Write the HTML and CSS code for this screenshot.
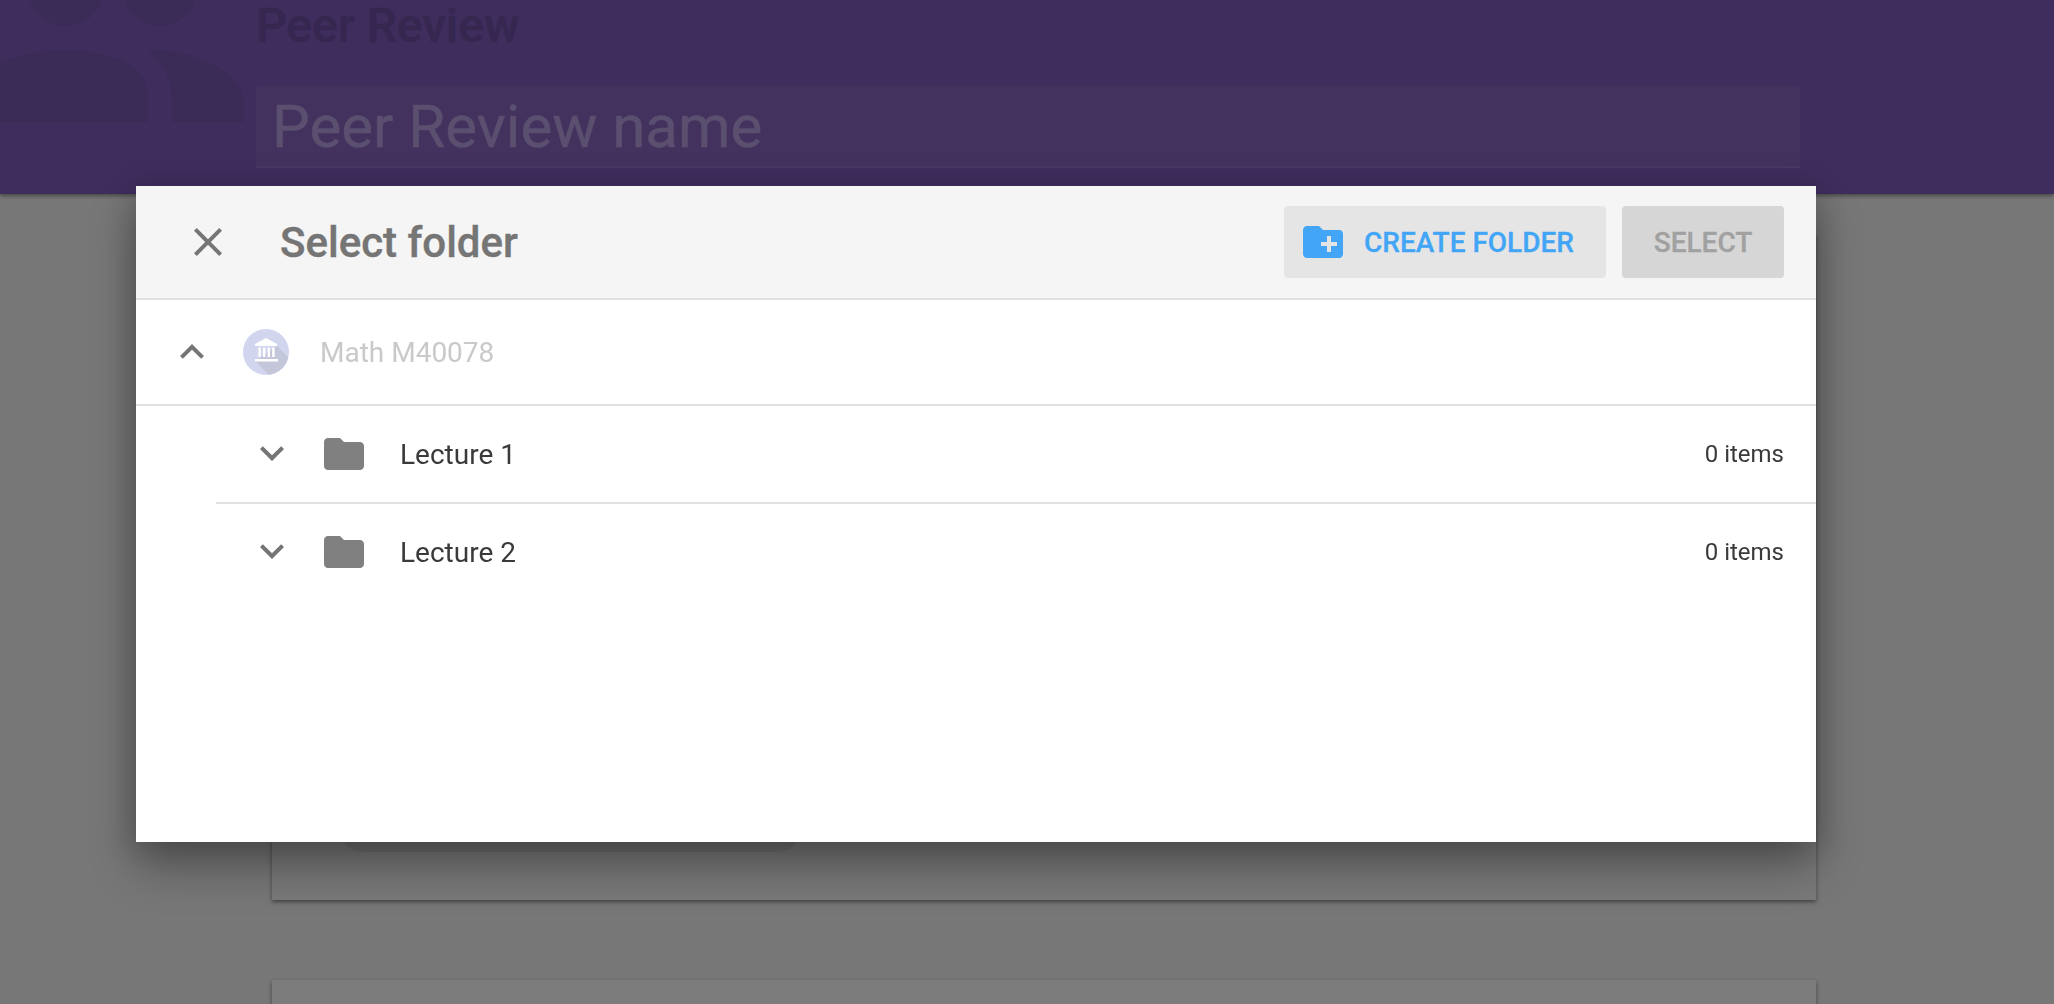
FILE: index.html
```html
<!DOCTYPE html>
<html lang="en">
<head>
<meta charset="utf-8">
<title>Select folder</title>
<link rel="stylesheet" href="styles.css">
</head>
<body>
<div class="page">
  <header class="hero">
    <svg class="hero-icon" width="256" height="194" viewBox="0 0 256 194">
      <circle cx="66" cy="-12" r="38"/>
      <circle cx="160" cy="-12" r="38"/>
      <path d="M-16 122V72C5 58 35 50 66 50C112 50 148 66 148 96V122Z"/>
      <path d="M148 50C200 50 244 74 244 104V122H172V98C172 80 163 63 148 50Z"/>
    </svg>
    <div class="hero-body">
      <h1 class="hero-title">Peer Review</h1>
      <div class="hero-input">Peer Review name</div>
    </div>
  </header>
  <main class="content">
    <section class="card card-first"><div class="pill"></div></section>
    <section class="card card-second"></section>
  </main>
</div>

<div class="dialog">
  <div class="dialog-head">
    <svg class="icon close" viewBox="0 0 24 24"><path d="M19 6.41L17.59 5 12 10.59 6.41 5 5 6.41 10.59 12 5 17.59 6.41 19 12 13.41 17.59 19 19 17.59 13.41 12z"/></svg>
    <h2 class="dialog-title">Select folder</h2>
    <button class="btn btn-create">
      <svg class="icon" viewBox="0 0 24 24"><path d="M20 6h-8l-2-2H4c-1.11 0-1.99.89-1.99 2L2 18c0 1.11.89 2 2 2h16c1.11 0 2-.89 2-2V8c0-1.11-.89-2-2-2zm-1 8h-3v3h-2v-3h-3v-2h3V9h2v3h3v2z"/></svg>
      <span>CREATE FOLDER</span>
    </button>
    <button class="btn btn-select">SELECT</button>
  </div>
  <div class="row row-root">
    <svg class="icon chev" viewBox="0 0 24 24"><path d="M12 8l-6 6 1.41 1.41L12 10.83l4.59 4.58L18 14z"/></svg>
    <svg class="badge" viewBox="0 0 46 46">
      <defs><clipPath id="disc"><circle cx="23" cy="23" r="23"/></clipPath></defs>
      <circle class="badge-bg" cx="23" cy="23" r="23"/>
      <path class="badge-shade" clip-path="url(#disc)" d="M34 17L64 47V64H44L12 32Z"/>
      <path class="badge-mark" d="M23 9L12 15V17H34V15ZM15.4 18.6H17.8V28H15.4ZM20 18.6H22.4V28H20ZM24.6 18.6H27V28H24.6ZM29.2 18.6H31.6V28H29.2ZM12 30H35V32.4H12Z"/>
    </svg>
    <span class="root-name">Math M40078</span>
  </div>
  <div class="tree">
    <div class="row row-folder">
      <svg class="icon chev chev-down" viewBox="0 0 24 24"><path d="M16.59 8.59L12 13.17 7.41 8.59 6 10l6 6 6-6z"/></svg>
      <svg class="icon folder" viewBox="0 0 24 24"><path d="M10 4H4c-1.1 0-1.99.9-1.99 2L2 18c0 1.1.9 2 2 2h16c1.1 0 2-.9 2-2V8c0-1.1-.9-2-2-2h-8l-2-2z"/></svg>
      <span class="folder-name">Lecture 1</span>
      <span class="folder-count">0 items</span>
    </div>
    <div class="row row-folder">
      <svg class="icon chev chev-down" viewBox="0 0 24 24"><path d="M16.59 8.59L12 13.17 7.41 8.59 6 10l6 6 6-6z"/></svg>
      <svg class="icon folder" viewBox="0 0 24 24"><path d="M10 4H4c-1.1 0-1.99.9-1.99 2L2 18c0 1.1.9 2 2 2h16c1.1 0 2-.9 2-2V8c0-1.1-.9-2-2-2h-8l-2-2z"/></svg>
      <span class="folder-name">Lecture 2</span>
      <span class="folder-count">0 items</span>
    </div>
  </div>
</div>
</body>
</html>
```
FILE: styles.css
```css
* { box-sizing: border-box; }
html, body { margin: 0; height: 100%; overflow: hidden; }
body { background: #777; font-family: Roboto, "Liberation Sans", sans-serif; }

.page { height: 1004px; overflow: hidden; }

.hero {
  height: 194px;
  display: flex;
  background: #3f2d5e;
  box-shadow: 0 2px 4px rgba(0, 0, 0, .4);
  position: relative;
}
.hero-icon { flex: none; fill: #3a2b57; }
.hero-body { width: 1544px; }
.hero-title {
  margin: 0;
  height: 86px;
  font-size: 48px;
  line-height: 52px;
  font-weight: 500;
  -webkit-text-stroke: .5px #352750;
  color: #352750;
}
.hero-input {
  height: 82px;
  padding-left: 16px;
  background: #43315e;
  border-bottom: 2px solid #4a3866;
  border-radius: 4px 4px 0 0;
  font-size: 60px;
  line-height: 82px;
  -webkit-text-stroke: .5px #5b4f70;
  color: #5b4f70;
}

.content { padding: 0 238px 0 272px; }
.card { background: #797979; box-shadow: 0 2px 4px rgba(0, 0, 0, .45); }
.card-first { height: 666px; margin-top: 40px; position: relative; display: flex; align-items: flex-end; padding: 0 0 48px 68px; }
.card-second { height: 200px; margin-top: 80px; background: #7c7c7c; }
.pill { width: 460px; height: 60px; border-radius: 0 0 22px 22px; background: rgba(0, 0, 0, .07); }

.dialog {
  position: fixed;
  left: 136px;
  top: 186px;
  width: 1680px;
  height: 656px;
  background: #fff;
  box-shadow: 0 24px 44px rgba(0, 0, 0, .3), 0 6px 30px 4px rgba(0, 0, 0, .16);
}
.dialog-head {
  height: 114px;
  display: flex;
  align-items: center;
  padding: 0 32px 0 48px;
  background: #f5f5f5;
  border-bottom: 2px solid #e0e0e0;
}
.icon { flex: none; width: 48px; height: 48px; display: block; }
.close { fill: #757575; }
.dialog-title {
  margin: 0 0 0 48px;
  flex: 1;
  font-size: 42px;
  font-weight: 500;
  -webkit-text-stroke: .4px #757575;
  color: #757575;
}
.btn {
  height: 72px;
  border: 0;
  border-radius: 4px;
  font: 500 28px Roboto, "Liberation Sans", sans-serif;
  -webkit-text-stroke: .3px currentColor;
  display: flex;
  align-items: center;
  justify-content: center;
}
.btn-create {
  width: 322px;
  background: #e5e5e5;
  color: #42a5f5;
  fill: #42a5f5;
  gap: 17px;
  margin-right: 16px;
  justify-content: flex-start;
  padding: 0 0 0 15px;
}
.btn-select { width: 162px; background: #d6d6d6; color: #a1a1a1; }

.row { display: flex; align-items: center; }
.row-root { height: 106px; padding: 0 0 0 32px; border-bottom: 2px solid #e0e0e0; }
.chev { fill: #757575; }
.chev-down { margin-bottom: 3px; }
.badge { flex: none; width: 46px; height: 46px; margin-left: 27px; }
.badge-bg { fill: #d1d6ee; }
.badge-shade { fill: #c4c7d9; }
.badge-mark { fill: #fff; }
.root-name { margin-left: 31px; font-size: 28px; color: #c9c9c9; }

.tree { padding-left: 80px; }
.row-folder { height: 96px; padding: 0 32px; }
.row-folder + .row-folder { height: 98px; border-top: 2px solid #e0e0e0; }
.folder { fill: #808080; margin-left: 24px; }
.folder-name { margin-left: 32px; flex: 1; font-size: 28px; color: #3a3a3a; }
.folder-count { font-size: 24px; color: #3a3a3a; }
```
